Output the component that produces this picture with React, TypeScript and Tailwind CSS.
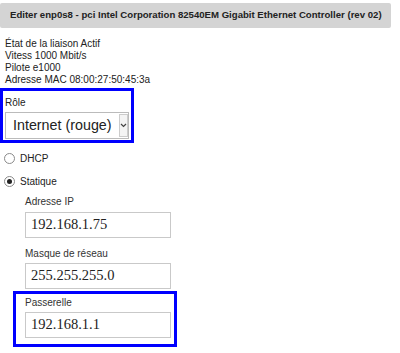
import React from 'react';

const info = [
  'État de la liaison Actif',
  'Vitess 1000 Mbit/s',
  'Pilote e1000',
  'Adresse MAC 08:00:27:50:45:3a',
];

function Field({ label, value, gap }: { label: string; value: string; gap: string }) {
  return (
    <div className="flex flex-col">
      <span className={`text-[10px] leading-[12px] text-[#333] ${gap}`}>{label}</span>
      <div className="w-[146px] h-[26px] border border-[#c9c9c9] bg-white flex items-center px-[5px]">
        <span className="text-[14.5px] text-[#222] font-['Liberation_Serif',serif]">{value}</span>
      </div>
    </div>
  );
}

export default function App() {
  return (
    <div className="w-[400px] h-[353px] bg-white font-['Liberation_Sans',Arial,sans-serif] text-[#222] overflow-hidden">
      <div className="pt-[3px]">
        <div className="w-[391px] h-[25px] bg-[#d4d4d4] rounded-[2px] flex items-center px-[10px] text-[9.6px] font-bold text-[#222] whitespace-nowrap">
          Editer enp0s8 - pci Intel Corporation 82540EM Gigabit Ethernet Controller (rev 02)
        </div>
      </div>

      <div className="mt-[10px] pl-[5px] text-[10px] leading-[12px]">
        {info.map((line) => (
          <div key={line}>{line}</div>
        ))}
      </div>

      <div className="mt-[2px] w-[134px] border-[3px] border-[#0000ff] px-[2px] pt-[6px] pb-[1px]">
        <div className="text-[10px] leading-[12px] mb-[3px]">Rôle</div>
        <div className="h-[27px] flex border border-[#bbb] bg-white">
          <div className="flex-1 flex items-center px-[7px] text-[14.3px] text-[#222] whitespace-nowrap">
            Internet (rouge)
          </div>
          <div className="w-[15px] my-[1px] mr-[1px] border border-[#ccc] bg-[#f4f4f4] flex items-center justify-center">
            <svg width="7" height="5" viewBox="0 0 7 5">
              <path d="M1 1 L3.5 3.5 L6 1" fill="none" stroke="#444" strokeWidth="1.2" />
            </svg>
          </div>
        </div>
      </div>

      <div className="pl-[4px] mt-[8px] flex flex-col gap-[9px] text-[10px]">
        <label className="h-[14px] flex items-center gap-[5px]">
          <span className="w-[11px] h-[11px] rounded-full border border-[#8a8a8a] bg-white" />
          DHCP
        </label>
        <label className="h-[14px] flex items-center gap-[5px]">
          <span className="w-[11px] h-[11px] rounded-full border border-[#8a8a8a] bg-white flex items-center justify-center">
            <span className="w-[5px] h-[5px] rounded-full bg-[#222]" />
          </span>
          Statique
        </label>
      </div>

      <div className="pl-[25px] mt-[8px] flex flex-col">
        <Field label="Adresse IP" value="192.168.1.75" gap="mb-[4px]" />
        <div className="mt-[10px]">
          <Field label="Masque de réseau" value="255.255.255.0" gap="mb-[3px]" />
        </div>
        <div className="mt-[2px] -ml-[12px] w-[164px] border-[3px] border-[#0000ff] pl-[9px] pt-[3px] pb-[6px]">
          <Field label="Passerelle" value="192.168.1.1" gap="mb-[3px]" />
        </div>
      </div>
    </div>
  );
}
